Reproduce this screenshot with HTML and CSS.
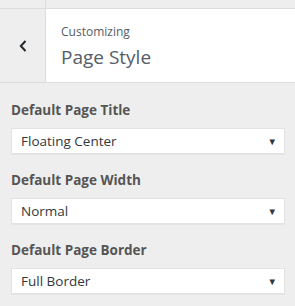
FILE: index.html
```html
<!DOCTYPE html>
<html>
<head>
<meta charset="utf-8">
<link rel="stylesheet" href="styles.css">
</head>
<body>
<div class="topbar"><div class="topbar-left"></div></div>
<header class="header">
  <button class="back" aria-label="Back">
    <svg width="8" height="12" viewBox="0 0 8 12"><path d="M6.5 1 L1.8 6 L6.5 11" fill="none" stroke="#23282d" stroke-width="2"/></svg>
  </button>
  <div class="title">
    <span class="sub">Customizing</span>
    <h1 class="main">Page Style</h1>
  </div>
</header>
<section class="controls">
  <div class="control">
    <label class="label">Default Page Title</label>
    <div class="select"><span>Floating Center</span><span class="arrow">▼</span></div>
  </div>
  <div class="control">
    <label class="label">Default Page Width</label>
    <div class="select"><span>Normal</span><span class="arrow">▼</span></div>
  </div>
  <div class="control">
    <label class="label">Default Page Border</label>
    <div class="select"><span>Full Border</span><span class="arrow">▼</span></div>
  </div>
</section>
</body>
</html>
```
FILE: styles.css
```css
* { box-sizing: border-box; }
html, body { margin: 0; padding: 0; }
body {
  width: 295px;
  height: 306px;
  background: #eeeeee;
  font-family: "Open Sans", "Noto Sans", sans-serif;
  color: #555d66;
  overflow: hidden;
}
.topbar {
  height: 9px;
  border-bottom: 1px solid #dddddd;
  display: flex;
}
.topbar-left {
  width: 46px;
  border-right: 1px solid #dddddd;
}
.header {
  display: flex;
  height: 74px;
  background: #ffffff;
  border-bottom: 1px solid #dddddd;
}
.back {
  width: 46px;
  height: 100%;
  background: #eeeeee;
  border: none;
  border-right: 1px solid #dddddd;
  padding: 0 0 0 1px;
  display: flex;
  align-items: center;
  justify-content: center;
}
.title {
  padding: 14px 0 0 15px;
  display: flex;
  flex-direction: column;
}
.sub {
  font-size: 12px;
  line-height: 18px;
  color: #555d66;
}
.main {
  margin: 4px 0 0;
  font-size: 19px;
  font-weight: 400;
  line-height: 24px;
  color: #555d66;
}
.controls {
  padding: 17px 10px 0 11px;
  display: flex;
  flex-direction: column;
  gap: 16px;
}
.control {
  display: flex;
  flex-direction: column;
}
.label {
  font-size: 13.5px;
  font-weight: 700;
  line-height: 20px;
  color: #555555;
  margin-bottom: 8px;
}
.select {
  height: 26px;
  background: #ffffff;
  border: 1px solid #e2e2e2;
  box-shadow: 0 1px 0 rgba(0,0,0,0.04);
  display: flex;
  align-items: center;
  justify-content: space-between;
  padding: 0 7px 0 9px;
  font-size: 13.5px;
  color: #32373c;
}
.arrow {
  font-size: 9.5px;
  color: #32373c;
}
```
